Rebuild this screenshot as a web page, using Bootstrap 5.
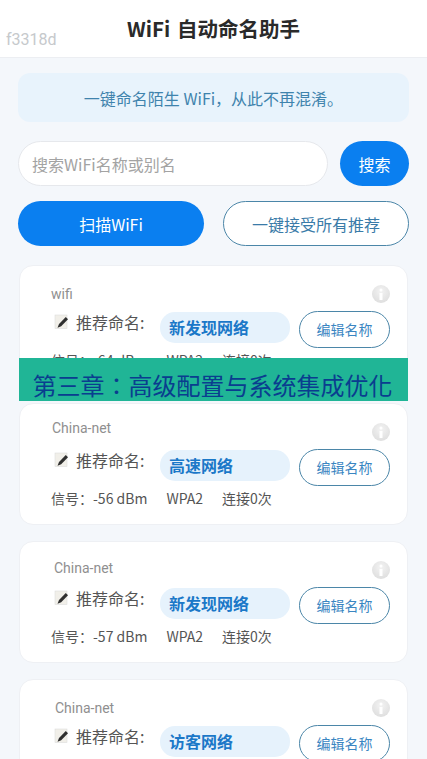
<!DOCTYPE html>
<html lang="zh">
<head>
<meta charset="utf-8">
<title>WiFi 自动命名助手</title>
<link href="https://cdn.jsdelivr.net/npm/bootstrap@5.3.0/dist/css/bootstrap.min.css" rel="stylesheet">
<style>
html,body{height:759px;overflow:hidden}
body{background:#f4f7fb;font-family:"Noto Sans CJK SC","Noto Sans",sans-serif;color:#444;position:relative}
.app-head{height:58px;background:#fff;border-bottom:1px solid #eceef2;position:relative}
.app-title{font-size:20.5px;font-weight:700;color:#2a2a2a;line-height:56px;text-align:center;margin:0;word-spacing:2px}
.ghost-id{position:absolute;left:6px;top:30px;font-size:16px;line-height:20px;color:#c6c9cc;font-family:"Roboto",sans-serif}
.page-body{padding:15px 18px 0}
.intro{height:49px;border-radius:12px;background:#e8f3fc;color:#3f83ad;font-size:16px;margin-bottom:19px}
.search-box{height:45px;border-radius:23px;border:1px solid #e6e8ec;background:#fff;font-size:16px;color:#333;padding:0 13px;box-shadow:none;flex:1}
.search-box::placeholder{color:#a3a3a3;opacity:1}
.btn-solid{background:#0a7ff0;color:#fff;border:0;border-radius:23px;font-size:16px;height:45px}
.btn-solid:hover{background:#0a7ff0;color:#fff}
.btn-find{width:69px;padding:0}
.btn-line{background:#fff;color:#3a7ba8;border:1.5px solid #4b86a8;border-radius:23px;font-size:16px;height:45px;padding:0}
.btn-line:hover{background:#fff;color:#3a7ba8}
.action-col{flex:0 0 186px}
.action-row{justify-content:space-between;margin:15px 0 19px}
.wifi-card{height:122px;border-radius:14px;background:#fff;border:1px solid #eef0f4;padding:0 17px 0 31px;margin:0 1px 16px;position:relative}
.wifi-name{font-size:14px;line-height:16px;color:#8f8f8f;font-family:"Roboto",sans-serif}
.top-row{height:44px;padding-top:20px}
.info-dot{width:18px;height:18px;border-radius:50%;background:radial-gradient(circle at 50% 35%,#f3f3f3,#d9d9d9);position:absolute;right:17px;top:19px;display:flex;align-items:center;justify-content:center}
.pick-row{height:39px}
.memo{width:15px;height:15px;margin:-16px 7px 0 3px;flex:none}
.pick-label{font-size:16px;color:#555;line-height:22px;width:84px;flex:none;margin-top:-15px}
.alias{width:130px;height:31px;line-height:31px;border-radius:15px;background:#e6f2fc;color:#1b78c8;font-weight:700;font-size:16px;padding-left:9px;flex:none;margin-top:-4px}
.btn-edit{width:91px;height:37px;border-radius:19px;background:#fff;border:1.5px solid #4b86a8;color:#3a86c2;font-size:14px;padding:0;margin-left:9px;flex:none}
.btn-edit:hover{background:#fff;color:#3a86c2}
.meta{font-size:14px;line-height:20px;color:#555;font-family:"Noto Sans CJK SC",sans-serif;gap:19px;margin-top:1px}
.shift-b{padding-top:16px}.shift-c{padding-top:18px}
.nudge-b{margin-left:1px}.nudge-c{margin-left:3px}.nudge-d{margin-left:4px}
.chapter{position:absolute;left:19px;right:19px;top:358px;height:43px;background:#20b596;color:#0a3d8f;font-family:"Noto Sans CJK TC",sans-serif;font-size:24px;text-align:center;overflow:hidden;white-space:nowrap;line-height:1;padding:15px 2px 0 0}
</style>
</head>
<body>
<header class="app-head">
  <h1 class="app-title">WiFi 自动命名助手</h1>
  <span class="ghost-id">f3318d</span>
</header>
<main class="page-body">
  <div class="intro d-flex align-items-center justify-content-center">一键命名陌生 WiFi，从此不再混淆。</div>
  <div class="d-flex gap-2">
    <input class="form-control search-box" type="text" placeholder="搜索WiFi名称或别名">
    <button class="btn btn-solid btn-find ms-1">搜索</button>
  </div>
  <div class="d-flex action-row">
    <button class="btn btn-solid action-col">扫描WiFi</button>
    <button class="btn btn-line action-col">一键接受所有推荐</button>
  </div>

  <section class="wifi-card">
    <div class="top-row"><div class="wifi-name">wifi</div></div>
    <span class="info-dot"><svg width="8" height="12" viewBox="0 0 8 12"><circle cx="4" cy="2" r="1.5" fill="#fff"/><rect x="2.5" y="5" width="3" height="7" fill="#fff"/></svg></span>
    <div class="d-flex align-items-center pick-row">
      <svg class="memo" viewBox="0 0 15 15"><rect x="1" y="1" width="12" height="13.5" fill="#f1efe9" stroke="#dcdcdc" stroke-width=".6"/><path d="M3.5 13.8 5 10 11.8 3 14 5.2 7.2 12.2Z" fill="#2f2f2f"/></svg>
      <span class="pick-label">推荐命名:</span>
      <span class="alias">新发现网络</span>
      <button class="btn btn-edit">编辑名称</button>
    </div>
    <div class="d-flex meta"><span>信号：-64 dBm</span><span>WPA2</span><span>连接0次</span></div>
  </section>

  <section class="wifi-card">
    <div class="top-row shift-b"><div class="wifi-name nudge-b">China-net</div></div>
    <span class="info-dot"><svg width="8" height="12" viewBox="0 0 8 12"><circle cx="4" cy="2" r="1.5" fill="#fff"/><rect x="2.5" y="5" width="3" height="7" fill="#fff"/></svg></span>
    <div class="d-flex align-items-center pick-row">
      <svg class="memo" viewBox="0 0 15 15"><rect x="1" y="1" width="12" height="13.5" fill="#f1efe9" stroke="#dcdcdc" stroke-width=".6"/><path d="M3.5 13.8 5 10 11.8 3 14 5.2 7.2 12.2Z" fill="#2f2f2f"/></svg>
      <span class="pick-label">推荐命名:</span>
      <span class="alias">高速网络</span>
      <button class="btn btn-edit">编辑名称</button>
    </div>
    <div class="d-flex meta"><span>信号：-56 dBm</span><span>WPA2</span><span>连接0次</span></div>
  </section>

  <section class="wifi-card">
    <div class="top-row shift-c"><div class="wifi-name nudge-c">China-net</div></div>
    <span class="info-dot"><svg width="8" height="12" viewBox="0 0 8 12"><circle cx="4" cy="2" r="1.5" fill="#fff"/><rect x="2.5" y="5" width="3" height="7" fill="#fff"/></svg></span>
    <div class="d-flex align-items-center pick-row">
      <svg class="memo" viewBox="0 0 15 15"><rect x="1" y="1" width="12" height="13.5" fill="#f1efe9" stroke="#dcdcdc" stroke-width=".6"/><path d="M3.5 13.8 5 10 11.8 3 14 5.2 7.2 12.2Z" fill="#2f2f2f"/></svg>
      <span class="pick-label">推荐命名:</span>
      <span class="alias">新发现网络</span>
      <button class="btn btn-edit">编辑名称</button>
    </div>
    <div class="d-flex meta"><span>信号：-57 dBm</span><span>WPA2</span><span>连接0次</span></div>
  </section>

  <section class="wifi-card">
    <div class="top-row"><div class="wifi-name nudge-d">China-net</div></div>
    <span class="info-dot"><svg width="8" height="12" viewBox="0 0 8 12"><circle cx="4" cy="2" r="1.5" fill="#fff"/><rect x="2.5" y="5" width="3" height="7" fill="#fff"/></svg></span>
    <div class="d-flex align-items-center pick-row">
      <svg class="memo" viewBox="0 0 15 15"><rect x="1" y="1" width="12" height="13.5" fill="#f1efe9" stroke="#dcdcdc" stroke-width=".6"/><path d="M3.5 13.8 5 10 11.8 3 14 5.2 7.2 12.2Z" fill="#2f2f2f"/></svg>
      <span class="pick-label">推荐命名:</span>
      <span class="alias">访客网络</span>
      <button class="btn btn-edit">编辑名称</button>
    </div>
  </section>
</main>
<div class="chapter" lang="zh-TW">第三章：高级配置与系统集成优化</div>
<script src="https://cdn.jsdelivr.net/npm/bootstrap@5.3.0/dist/js/bootstrap.bundle.min.js"></script>
</body>
</html>
